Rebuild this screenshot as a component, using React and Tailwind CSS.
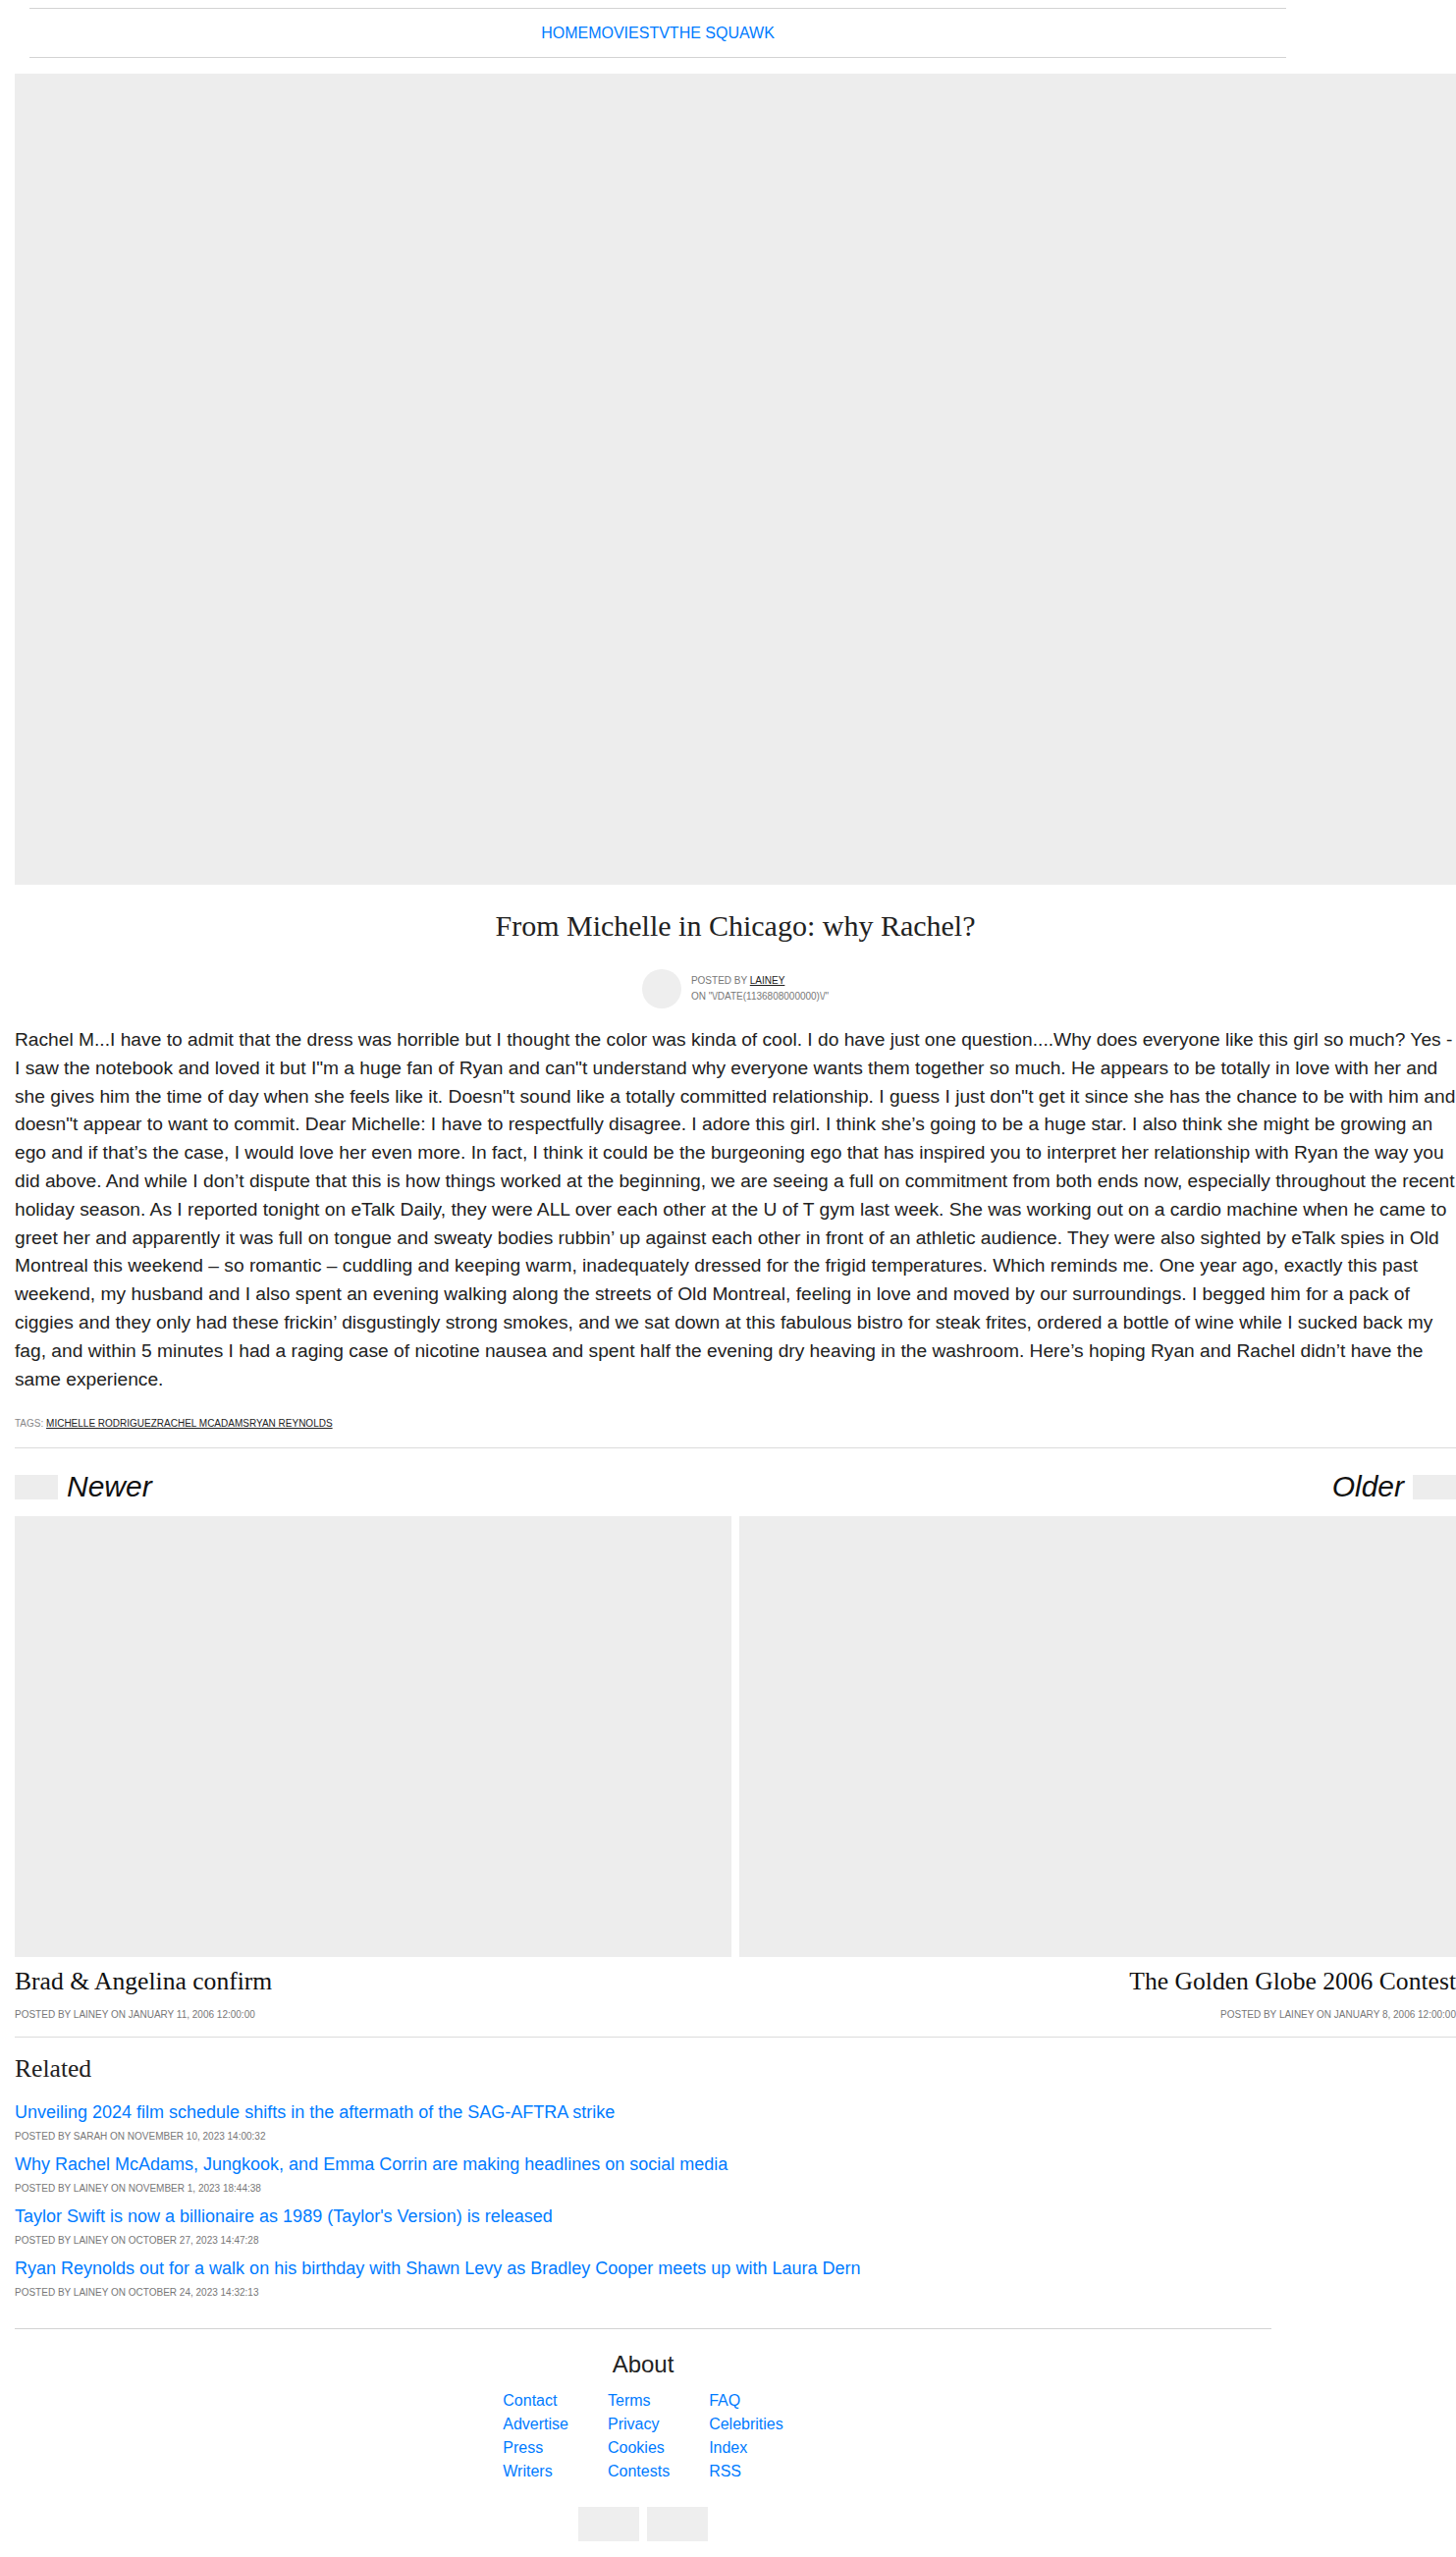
import React from "react";

const SANS = { fontFamily: '"Liberation Sans", Arial, sans-serif' };
const SERIF = { fontFamily: '"Liberation Serif", "Times New Roman", serif' };

const body =
  "Rachel M...I have to admit that the dress was horrible but I thought the color was kinda of cool. I do have just one question....Why does everyone like this girl so much? Yes - I saw the notebook and loved it but I\"m a huge fan of Ryan and can\"t understand why everyone wants them together so much. He appears to be totally in love with her and she gives him the time of day when she feels like it. Doesn\"t sound like a totally committed relationship. I guess I just don\"t get it since she has the chance to be with him and doesn\"t appear to want to commit. Dear Michelle: I have to respectfully disagree. I adore this girl. I think she’s going to be a huge star. I also think she might be growing an ego and if that’s the case, I would love her even more. In fact, I think it could be the burgeoning ego that has inspired you to interpret her relationship with Ryan the way you did above. And while I don’t dispute that this is how things worked at the beginning, we are seeing a full on commitment from both ends now, especially throughout the recent holiday season. As I reported tonight on eTalk Daily, they were ALL over each other at the U of T gym last week. She was working out on a cardio machine when he came to greet her and apparently it was full on tongue and sweaty bodies rubbin’ up against each other in front of an athletic audience. They were also sighted by eTalk spies in Old Montreal this weekend – so romantic – cuddling and keeping warm, inadequately dressed for the frigid temperatures. Which reminds me. One year ago, exactly this past weekend, my husband and I also spent an evening walking along the streets of Old Montreal, feeling in love and moved by our surroundings. I begged him for a pack of ciggies and they only had these frickin’ disgustingly strong smokes, and we sat down at this fabulous bistro for steak frites, ordered a bottle of wine while I sucked back my fag, and within 5 minutes I had a raging case of nicotine nausea and spent half the evening dry heaving in the washroom. Here’s hoping Ryan and Rachel didn’t have the same experience.";

const related = [
  ["Unveiling 2024 film schedule shifts in the aftermath of the SAG-AFTRA strike", "POSTED BY SARAH ON NOVEMBER 10, 2023 14:00:32"],
  ["Why Rachel McAdams, Jungkook, and Emma Corrin are making headlines on social media", "POSTED BY LAINEY ON NOVEMBER 1, 2023 18:44:38"],
  ["Taylor Swift is now a billionaire as 1989 (Taylor's Version) is released", "POSTED BY LAINEY ON OCTOBER 27, 2023 14:47:28"],
  ["Ryan Reynolds out for a walk on his birthday with Shawn Levy as Bradley Cooper meets up with Laura Dern", "POSTED BY LAINEY ON OCTOBER 24, 2023 14:32:13"],
];

export default function App() {
  const cols = [
    ["Contact", "Advertise", "Press", "Writers"],
    ["Terms", "Privacy", "Cookies", "Contests"],
    ["FAQ", "Celebrities", "Index", "RSS"],
  ];
  return (
    <div className="bg-white w-[1483px] pt-[8px] pb-[16px]" style={SANS}>
      {/* Header nav */}
      <div className="ml-[30px] w-[1280px] h-[51px] border-y border-[#d3d3d3] flex items-center justify-center">
        <nav className="flex text-[16px] leading-[20px] text-[#007bff]">
          <a>HOME</a>
          <a>MOVIES</a>
          <a>TV</a>
          <a>THE SQUAWK</a>
        </nav>
      </div>

      <div className="pl-[15px]">
        {/* Hero */}
        <div className="mt-[16px] h-[826px] bg-[#ededed]" />

        {/* Title */}
        <h1 className="mt-[23px] text-center text-[30px] leading-[38px] text-[#222]" style={SERIF}>
          From Michelle in Chicago: why Rachel?
        </h1>

        {/* Author */}
        <div className="mt-[25px] flex justify-center items-center gap-[10px]">
          <div className="w-[40px] h-[40px] rounded-full bg-[#eeeeee]" />
          <div className="text-[10px] leading-[16px] text-[#777] uppercase">
            <div>
              POSTED BY <a className="text-[#222] underline">LAINEY</a>
            </div>
            <div>{'ON "\\/DATE(1136808000000)\\/"'}</div>
          </div>
        </div>

        {/* Body */}
        <p className="mt-[18px] text-[19.2px] leading-[28.8px] text-[#222]">{body}</p>

        {/* Tags */}
        <div className="mt-[23px] text-[10px] leading-[15px] uppercase text-[#888]">
          TAGS: <a className="text-[#222] underline">MICHELLE RODRIGUEZ</a>
          <a className="text-[#222] underline">RACHEL MCADAMS</a>
          <a className="text-[#222] underline">RYAN REYNOLDS</a>
        </div>

        <div className="mt-[17px] border-t border-[#dcdcdc]" />

        {/* Newer / Older */}
        <div className="mt-[24px] flex justify-between items-center h-[30px]">
          <div className="flex items-center gap-[9px]">
            <div className="w-[44px] h-[25px] bg-[#ededed]" />
            <span className="text-[30px] leading-[30px] italic text-[#111]">Newer</span>
          </div>
          <div className="flex items-center gap-[9px]">
            <span className="text-[30px] leading-[30px] italic text-[#111]">Older</span>
            <div className="w-[44px] h-[25px] bg-[#ededed]" />
          </div>
        </div>

        {/* Cards */}
        <div className="mt-[15px] grid grid-cols-2 gap-[8px]">
          <div>
            <div className="h-[449px] bg-[#ededed]" />
            <h3 className="mt-[9.5px] text-[25.6px] leading-[30.7px] text-[#111]" style={SERIF}>
              Brad &amp; Angelina confirm
            </h3>
            <div className="mt-[10px] text-[10px] leading-[15px] text-[#777]">
              POSTED BY LAINEY ON JANUARY 11, 2006 12:00:00
            </div>
          </div>
          <div className="text-right">
            <div className="h-[449px] bg-[#ededed]" />
            <h3 className="mt-[9.5px] text-[25.6px] leading-[30.7px] text-[#111]" style={SERIF}>
              The Golden Globe 2006 Contest
            </h3>
            <div className="mt-[10px] text-[10px] leading-[15px] text-[#777]">
              POSTED BY LAINEY ON JANUARY 8, 2006 12:00:00
            </div>
          </div>
        </div>

        <div className="mt-[15.6px] border-t border-[#dcdcdc]" />

        {/* Related */}
        <h2 className="mt-[17px] text-[25.6px] leading-[30.7px] text-[#222]" style={SERIF}>
          Related
        </h2>
        <div className="mt-[15px] flex flex-col gap-[8px]">
          {related.map(([t, m]) => (
            <div key={t}>
              <a className="block text-[18px] leading-[27px] text-[#007bff]">{t}</a>
              <div className="mt-[3px] text-[10px] leading-[15px] text-[#777]">{m}</div>
            </div>
          ))}
        </div>

        {/* Footer */}
        <div className="mt-[29px] w-[1280px] border-t border-[#d3d3d3]" />
        <div className="w-[1280px]">
          <h2 className="mt-[22px] text-center text-[24px] leading-[28.8px] text-[#222]">About</h2>
          <div className="mt-[10px] flex justify-center gap-[40px]">
            {cols.map((c, i) => (
              <div key={i} className="flex flex-col text-[16px] leading-[24px] text-[#007bff]">
                {c.map((l) => (
                  <a key={l}>{l}</a>
                ))}
              </div>
            ))}
          </div>
          <div className="mt-[24px] flex justify-center gap-[8px]">
            <div className="w-[62px] h-[35px] bg-[#eeeeee]" />
            <div className="w-[62px] h-[35px] bg-[#eeeeee]" />
          </div>
        </div>
      </div>
    </div>
  );
}
